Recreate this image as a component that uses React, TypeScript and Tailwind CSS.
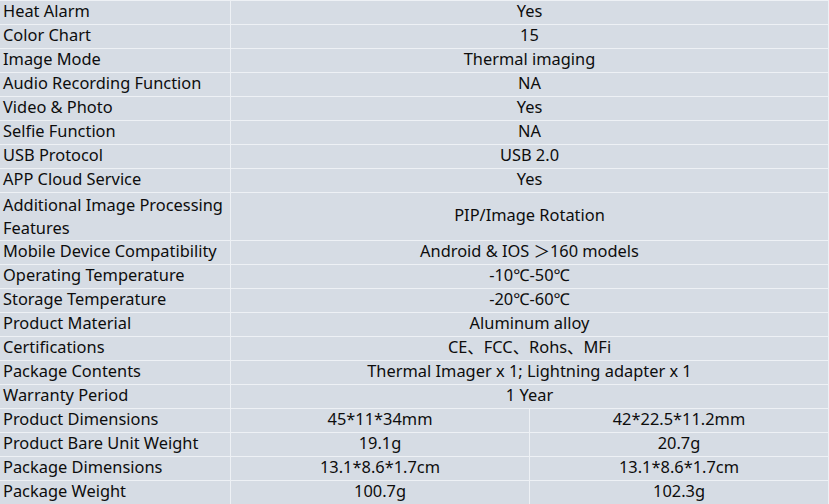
const rows: { label: string; value?: string; split?: [string, string]; tall?: boolean }[] = [
  { label: 'Heat Alarm', value: 'Yes' },
  { label: 'Color Chart', value: '15' },
  { label: 'Image Mode', value: 'Thermal imaging' },
  { label: 'Audio Recording Function', value: 'NA' },
  { label: 'Video & Photo', value: 'Yes' },
  { label: 'Selfie Function', value: 'NA' },
  { label: 'USB Protocol', value: 'USB 2.0' },
  { label: 'APP Cloud Service', value: 'Yes' },
  { label: 'Additional Image Processing Features', value: 'PIP/Image Rotation', tall: true },
  { label: 'Mobile Device Compatibility', value: 'Android & IOS ＞160 models' },
  { label: 'Operating Temperature', value: '-10℃-50℃' },
  { label: 'Storage Temperature', value: '-20℃-60℃' },
  { label: 'Product Material', value: 'Aluminum alloy' },
  { label: 'Certifications', value: 'CE、FCC、Rohs、MFi' },
  { label: 'Package Contents', value: 'Thermal Imager x 1; Lightning adapter x 1' },
  { label: 'Warranty Period', value: '1 Year' },
  { label: 'Product Dimensions', split: ['45*11*34mm', '42*22.5*11.2mm'] },
  { label: 'Product Bare Unit Weight', split: ['19.1g', '20.7g'] },
  { label: 'Package Dimensions', split: ['13.1*8.6*1.7cm', '13.1*8.6*1.7cm'] },
  { label: 'Package Weight', split: ['100.7g', '102.3g'] },
];

export default function App() {
  return (
    <div
      className="w-[829px] h-[504px] overflow-hidden bg-[#d6dce4] text-[16.4px] text-[#0d0d0d] border-r border-[#eef1f5]"
      style={{ fontFamily: '"Noto Sans", "Noto Sans CJK SC", sans-serif' }}
    >
      {rows.map((r) => (
        <div
          key={r.label}
          className={`flex border-t border-[#eef1f5] ${r.tall ? 'h-[48px]' : 'h-[24px]'}`}
        >
          <div
            className={`w-[231px] shrink-0 border-r border-[#eef1f5] pl-[3px] flex items-center ${
              r.tall ? 'pb-[2px] leading-[23px]' : 'pb-[3px] leading-[20px]'
            }`}
          >
            {r.label}
          </div>
          {r.split ? (
            <div className="flex flex-1">
              <div className="w-[299px] border-r border-[#eef1f5] pb-[3px] flex items-center justify-center leading-[20px]">
                {r.split[0]}
              </div>
              <div className="flex-1 pb-[3px] flex items-center justify-center leading-[20px]">{r.split[1]}</div>
            </div>
          ) : (
            <div className="flex-1 pb-[3px] flex items-center justify-center leading-[20px]">{r.value}</div>
          )}
        </div>
      ))}
    </div>
  );
}
